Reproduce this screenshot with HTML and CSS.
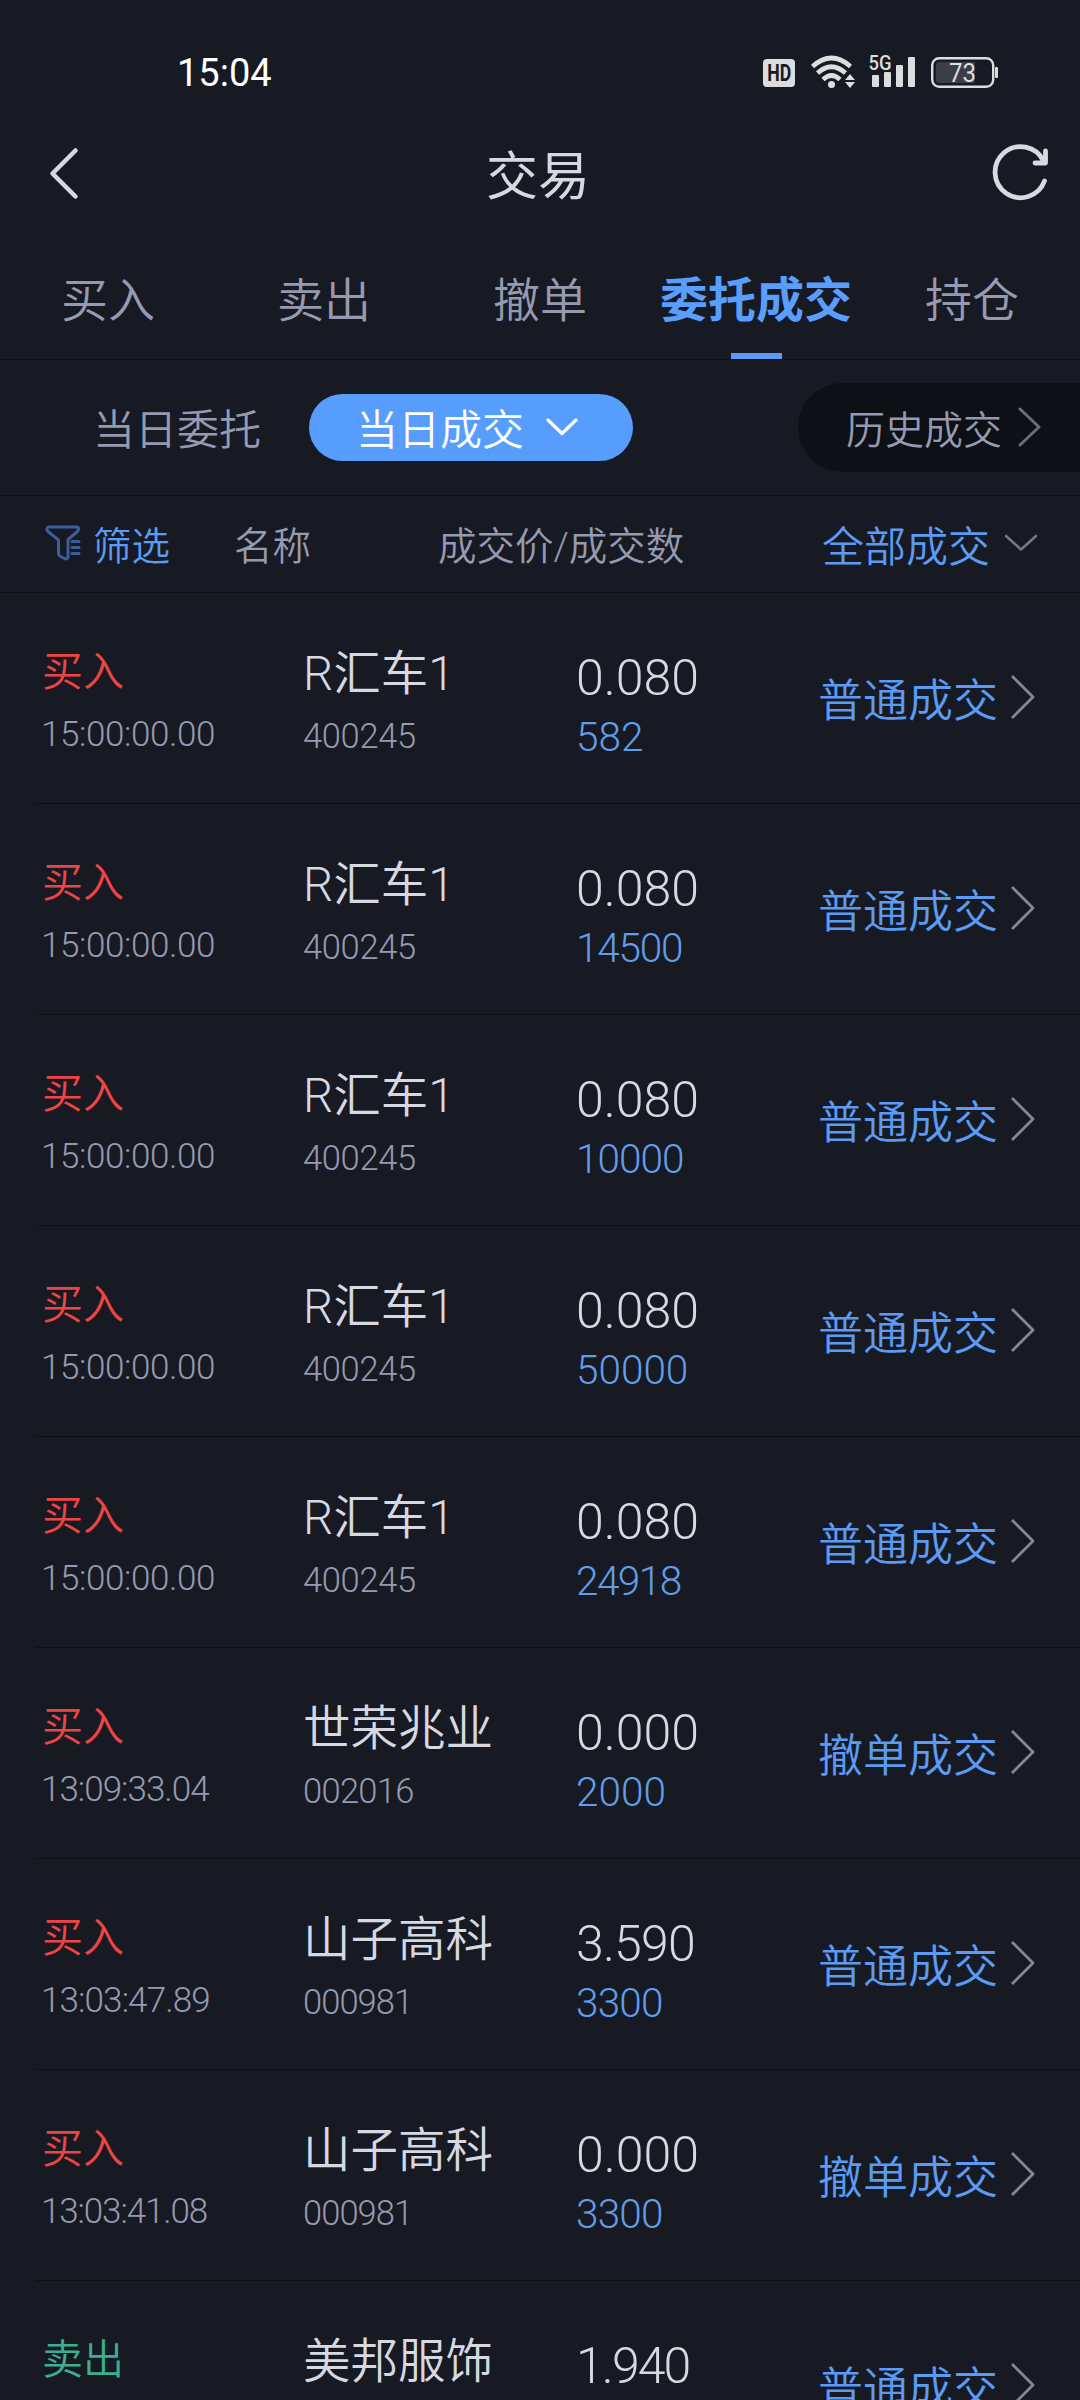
FILE: index.html
```html
<!DOCTYPE html>
<html lang="zh-CN">
<head>
<meta charset="utf-8">
<title>交易</title>
<link rel="stylesheet" href="styles.css">
</head>
<body>
<div class="screen">
  <div class="status-bar">
    <span class="clock">15:04</span>
    <svg class="status-icons" width="240" height="40" viewBox="0 0 240 40">
      <rect x="3" y="9" width="32" height="28" rx="4"/>
      <text class="hd" x="7.3" y="31" textLength="24" lengthAdjust="spacingAndGlyphs">HD</text>
      <g class="arcs">
        <path d="M52.500 16.500Q71.500 -.5 90.500 16.500"/>
        <path d="M57.500 23Q71.500 10.500 85.500 23"/>
        <path d="M63 29.500Q71.500 21.500 80 29.500"/>
      </g>
      <circle cx="71.500" cy="34.500" r="3.500"/>
      <path d="M90 24l5 6H85zM85 32h10l-5 6z"/>
      <text class="net" x="108.500" y="19.500" textLength="23" lengthAdjust="spacingAndGlyphs">5G</text>
      <rect x="112" y="25" width="7" height="12" rx="1"/>
      <rect x="124" y="22" width="7" height="15" rx="1"/>
      <rect x="136" y="15" width="7" height="22" rx="1"/>
      <rect x="148" y="7" width="7" height="30" rx="1"/>
      <rect class="battery" x="172.200" y="8.200" width="61" height="28.600" rx="7"/>
      <path class="charge" d="M179 12h36v21h-36a3 3 0 0 1-3-3V15a3 3 0 0 1 3-3z"/>
      <rect x="235" y="17" width="3" height="11" rx="1"/>
      <text class="level" x="189" y="31.500" textLength="27" lengthAdjust="spacingAndGlyphs">73</text>
    </svg>
  </div>

  <header class="title-bar">
    <svg class="back" width="32" height="56" viewBox="0 0 32 56"><path d="M28.500 5.500 5.500 28.500l23 23"/></svg>
    <h1 class="title">交易</h1>
    <svg class="refresh" width="60" height="60" viewBox="0 0 60 60"><path d="M53.500 39A25.500 25.500 0 1 1 52.500 19M54.500 9V21H44"/></svg>
  </header>

  <nav class="tabs">
    <span class="tab">买入</span>
    <span class="tab">卖出</span>
    <span class="tab">撤单</span>
    <span class="tab active">委托成交</span>
    <span class="tab">持仓</span>
  </nav>

  <div class="modes">
    <span class="mode">当日委托</span>
    <span class="mode-pill">当日成交<svg width="32" height="18" viewBox="0 0 32 18"><path d="M2 2 16 15.500 30 2"/></svg></span>
    <span class="history">历史成交<svg width="24" height="40" viewBox="0 0 24 40"><path d="M2 2 21 20 2 38"/></svg></span>
  </div>

  <div class="columns">
    <span class="filter"><svg width="36" height="36" viewBox="0 0 36 36"><path d="M3.500 2h29q2 1.500 0 4.500L23 14.500V31q0 3-2.500 3l-5-2.500q-2-1-2-3V15L3 6.500q-2.500-3 .5-4.500zM27 16.500h7M27 22.500h7M27 28.500h7"/></svg><span>筛选</span></span>
    <span class="col-name">名称</span>
    <span class="col-price">成交价/成交数</span>
    <span class="col-type">全部成交<svg width="32" height="18" viewBox="0 0 32 18"><path d="M1 2 16 15.500 31 2"/></svg></span>
  </div>

  <main class="list" id="list"></main>
</div>
<script src="app.js"></script>
</body>
</html>
```
FILE: styles.css
```css
* { box-sizing: border-box; }
body {
  margin: 0;
  background: #171a22;
  font-family: Roboto, "Noto Sans CJK SC", sans-serif;
  font-weight: 350;
  color: #969ab1;
}
svg { flex: none; fill: none; stroke-linecap: round; stroke-linejoin: round; }
.screen { width: 1080px; height: 2400px; overflow: hidden; }

.status-bar { height: 130px; padding: 50px 80px 0 177px; display: flex; justify-content: space-between; }
.clock { font-size: 38px; line-height: 46px; font-weight: 450; color: #fff; }
.status-icons { fill: #dcdddf; }
.status-icons text { font-family: Roboto, sans-serif; }
.status-icons .arcs { fill: none; stroke: #dcdddf; stroke-width: 4.600; stroke-linecap: butt; }
.status-icons .battery { fill: none; stroke: #dcdddf; stroke-width: 2.400; }
.status-icons .charge { fill: #3b3e45; }
.status-icons .hd { font-size: 23px; font-weight: 700; fill: #171a22; }
.status-icons .net { font-size: 21px; font-weight: 500; }
.status-icons .level { font-size: 26px; font-weight: 400; }

.title-bar { height: 110px; padding: 0 29px 0 47px; display: grid; grid-template-columns: 60px 1fr 60px; align-items: start; }
.back { margin-top: 15px; stroke: #d6d8e2; stroke-width: 4.500; }
.title { margin: 10px 0 0; padding-right: 22px; font-size: 52px; line-height: 76px; font-weight: 400; color: #d6d8e2; text-align: center; }
.refresh { margin-top: 12px; stroke: #dad8e3; stroke-width: 4.800; }

.tabs { height: 120px; display: grid; grid-template-columns: repeat(5, 216px); border-bottom: 1px solid #0e1015; font-size: 47px; line-height: 64px; text-align: center; }
.tab { padding-top: 29px; }
.tab.active { color: #599efd; font-weight: 600; font-size: 48px; display: flex; flex-direction: column; align-items: center; justify-content: space-between; }
.tab.active::after { content: ""; width: 51px; height: 6px; background: #599bf6; }

.modes { height: 136px; padding-left: 93px; display: flex; align-items: center; border-bottom: 1px solid #0e1015; font-size: 42px; }
.mode { padding-bottom: 2px; }
.mode-pill { margin-left: 48px; width: 324px; height: 67px; padding: 0 0 2px 47px; display: flex; align-items: center; gap: 22px; border-radius: 34px; background: #579dfe; color: #fff; }
.mode-pill svg { stroke: #fff; stroke-width: 3.200; }
.history { margin-left: auto; width: 282px; height: 89px; padding: 0 0 2px 48px; display: flex; align-items: center; gap: 16px; border-radius: 45px 0 0 45px; background: #0d1014; font-size: 39px; }
.history svg { stroke: #666d7c; stroke-width: 3; }

.columns { height: 97px; display: grid; grid-template-columns: 189px 204px 384px auto; padding: 0 0 2px 45px; align-items: center; border-bottom: 1px solid #0e1015; font-size: 38.500px; }
.filter { display: flex; align-items: center; gap: 12px; color: #5b9bf3; }
.filter svg { stroke: #3c5e9b; stroke-width: 3; }
.col-type { display: flex; align-items: center; gap: 15px; color: #5b9bf3; font-size: 42px; }
.col-type svg { stroke: #73778a; stroke-width: 2.600; }

.deal { height: 211px; margin-left: 36px; padding-left: 6px; display: grid; grid-template-columns: 261px 273px 242px auto; border-bottom: 1px solid #0e1015; }
.deal div { display: flex; flex-direction: column; white-space: nowrap; }
.side { padding-top: 49px; font-size: 41px; line-height: 60px; }
.buy { color: #ef4444; }
.sell { color: #3cae91; }
.time { padding-top: 3px; margin-left: -1px; font-size: 35px; color: #969ab1; }
.stock { padding-top: 49px; font-size: 47.500px; line-height: 64px; color: #d6d8e2; }
.code { padding-top: 2px; font-size: 34.500px; line-height: 56px; color: #969ab1; }
.price { padding-top: 55px; font-size: 50px; line-height: 60px; color: #d6d8e2; }
.count { margin-top: -1px; font-size: 40.500px; color: #629deb; }
.deal .kind { padding-bottom: 1px; flex-direction: row; align-items: center; gap: 12px; font-size: 45px; color: #5b9bf3; }
.kind svg { margin-bottom: 2px; stroke: #858893; stroke-width: 2.800; stroke-linecap: butt; }
```
FILE: app.js
```js
const deals = [
  ["买入", "15:00:00.00", "R汇车1", "400245", "0.080", "582", "普通成交"],
  ["买入", "15:00:00.00", "R汇车1", "400245", "0.080", "14500", "普通成交"],
  ["买入", "15:00:00.00", "R汇车1", "400245", "0.080", "10000", "普通成交"],
  ["买入", "15:00:00.00", "R汇车1", "400245", "0.080", "50000", "普通成交"],
  ["买入", "15:00:00.00", "R汇车1", "400245", "0.080", "24918", "普通成交"],
  ["买入", "13:09:33.04", "世荣兆业", "002016", "0.000", "2000", "撤单成交"],
  ["买入", "13:03:47.89", "山子高科", "000981", "3.590", "3300", "普通成交"],
  ["买入", "13:03:41.08", "山子高科", "000981", "0.000", "3300", "撤单成交"],
  ["卖出", "", "美邦服饰", "", "1.940", "", "普通成交"]
];

// Tightens figures that contain narrow digits, in em.
const narrow = { 1: 0.12, 3: 0.04, 4: 0.03, 9: 0.04 };
function figure(cls, text) {
  const saved = [...text].reduce((sum, c) => sum + (narrow[c] || 0), 0);
  const spacing = text ? -(saved / text.length).toFixed(3) : 0;
  return `<span class="${cls}" style="letter-spacing:${spacing}em">${text}</span>`;
}

document.getElementById("list").innerHTML = deals.map(([side, time, name, code, price, count, kind]) => `
  <section class="deal">
    <div class="side ${side === "买入" ? "buy" : "sell"}"><span>${side}</span>${figure("time", time)}</div>
    <div class="stock"><span>${name}</span>${figure("code", code)}</div>
    <div class="price">${figure("amount", price)}${figure("count", count)}</div>
    <div class="kind">${kind}<svg width="26" height="44" viewBox="0 0 26 44"><path d="M2 1 23 22 2 43"/></svg></div>
  </section>`).join("");
```
